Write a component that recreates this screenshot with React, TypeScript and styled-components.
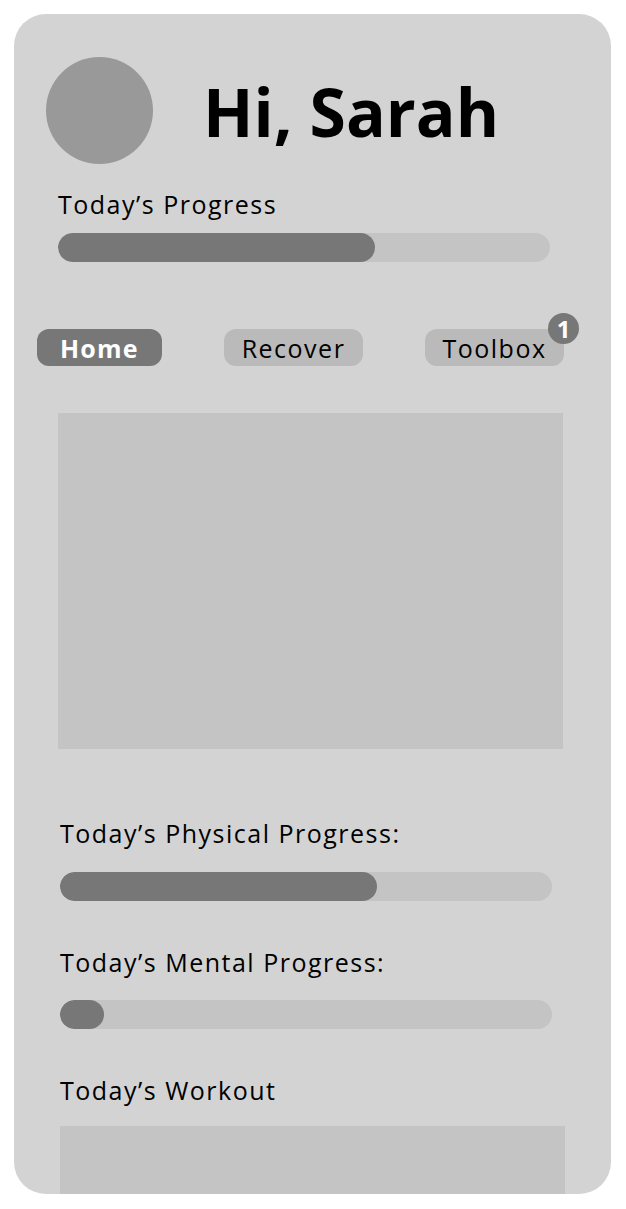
import React from 'react'
import styled, { createGlobalStyle } from 'styled-components'

const GlobalStyle = createGlobalStyle`
  html, body {
    margin: 0;
    background: #ffffff;
    font-family: "Open Sans", "Liberation Sans", sans-serif;
    color: #000;
  }
`

const Page = styled.div`
  padding: 14px 15px 15px 14px;
`

const Card = styled.div`
  height: 1180px;
  background: #d3d3d3;
  border-radius: 32px;
  overflow: hidden;
  display: flex;
  flex-direction: column;
`

const Header = styled.div`
  display: flex;
  align-items: center;
  padding: 43px 0 0 32px;
`

const Avatar = styled.div`
  width: 107px;
  height: 107px;
  border-radius: 50%;
  background: #999999;
  flex-shrink: 0;
`

const Title = styled.h1`
  margin: 0 0 0 50px;
  font-size: 66px;
  font-weight: 700;
  letter-spacing: 0;
  line-height: 1;
`

const Section = styled.div<{ $left: number; $top: number }>`
  display: flex;
  flex-direction: column;
  padding-left: ${p => p.$left}px;
  margin-top: ${p => p.$top}px;
`

const Label = styled.div`
  font-size: 25px;
  letter-spacing: 1.5px;
  line-height: 29px;
  height: 29px;
  white-space: nowrap;
`

const Track = styled.div<{ $gap: number }>`
  width: 492px;
  height: 29px;
  border-radius: 15px;
  background: #c4c4c4;
  margin-top: ${p => p.$gap}px;
  overflow: hidden;
  display: flex;
`

const Fill = styled.div`
  height: 100%;
  border-radius: 15px;
  background: #777777;
`

const Tabs = styled.div`
  display: flex;
  gap: 62px;
  padding-left: 23px;
  margin-top: 67px;
`

const Tab = styled.div<{ $active?: boolean; $width: number }>`
  position: relative;
  width: ${p => p.$width}px;
  height: 37px;
  padding: 0 0 0 ${p => (p.$active ? 23 : 0)}px;
  justify-content: ${p => (p.$active ? 'flex-start' : 'center')};
  border-radius: 12px;
  background: ${p => (p.$active ? '#777777' : '#bababa')};
  color: ${p => (p.$active ? '#ffffff' : '#000000')};
  font-weight: ${p => (p.$active ? 700 : 400)};
  font-size: 25px;
  letter-spacing: ${p => (p.$active ? 1.2 : 1.5)}px;
  display: flex;
  align-items: center;
  box-sizing: border-box;
  white-space: nowrap;
`

const Badge = styled.span`
  position: absolute;
  top: -16px;
  right: -15px;
  width: 31px;
  height: 31px;
  border-radius: 50%;
  background: #777777;
  color: #ffffff;
  font-size: 24px;
  font-weight: 700;
  letter-spacing: 0;
  display: flex;
  align-items: center;
  justify-content: center;
`

const Placeholder = styled.div<{ $height: number; $gap?: number }>`
  width: 505px;
  height: ${p => p.$height}px;
  margin-top: ${p => p.$gap ?? 0}px;
  background: #c4c4c4;
`

type BarProps = { label: string; pct: number; gap: number; left: number; top: number }

const ProgressBlock = ({ label, pct, gap, left, top }: BarProps) => (
  <Section $left={left} $top={top}>
    <Label>{label}</Label>
    <Track $gap={gap}>
      <Fill style={{ width: `${pct}%` }} />
    </Track>
  </Section>
)

export default function App() {
  return (
    <Page>
      <GlobalStyle />
      <Card>
        <Header>
          <Avatar />
          <Title>Hi, Sarah</Title>
        </Header>

        <ProgressBlock label="Today’s Progress" pct={64.4} gap={14} left={44} top={26} />

        <Tabs>
          <Tab $active $width={125}>Home</Tab>
          <Tab $width={139}>Recover</Tab>
          <Tab $width={139}>
            Toolbox
            <Badge>1</Badge>
          </Tab>
        </Tabs>

        <Section $left={44} $top={47}>
          <Placeholder $height={336} />
        </Section>

        <ProgressBlock label="Today’s Physical Progress:" pct={64.4} gap={24} left={46} top={70} />
        <ProgressBlock label="Today’s Mental Progress:" pct={8.9} gap={23} left={46} top={47} />

        <Section $left={46} $top={47}>
          <Label>Today’s Workout</Label>
          <Placeholder $height={120} $gap={21} />
        </Section>
      </Card>
    </Page>
  )
}
